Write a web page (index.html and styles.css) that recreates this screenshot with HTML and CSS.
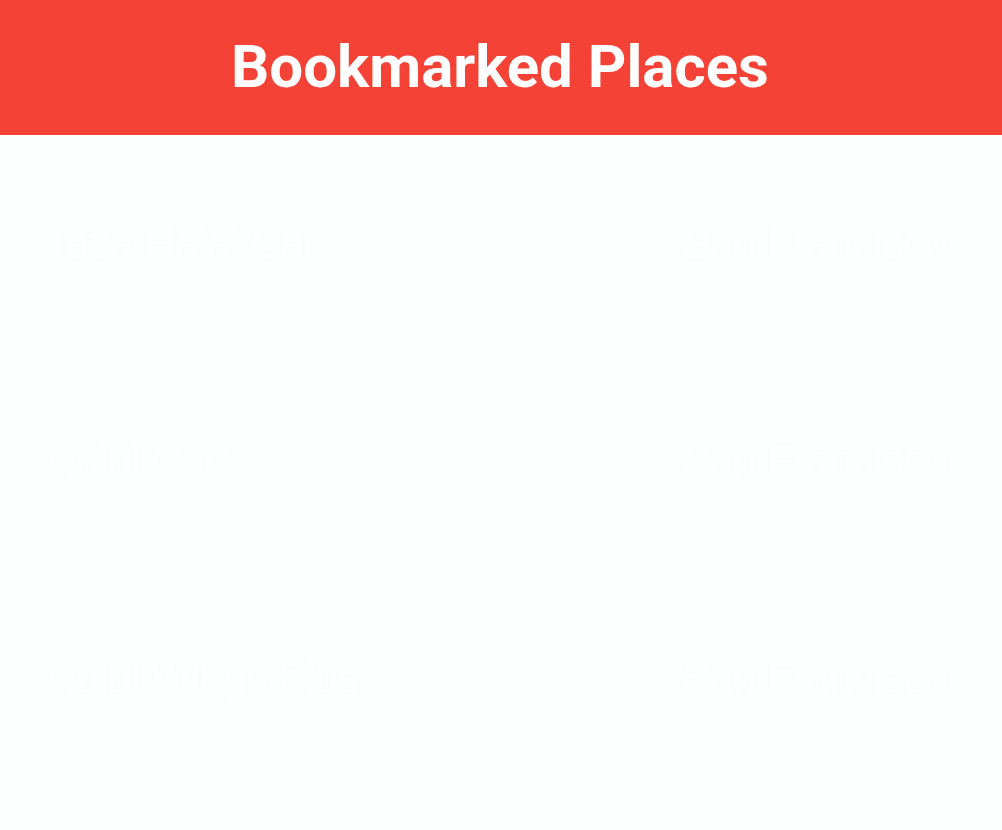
FILE: index.html
```html
<!DOCTYPE html>
<html>
<head>
<meta charset="utf-8">
<link rel="stylesheet" href="styles.css">
</head>
<body>
<header class="header"><h1 class="title">Bookmarked Places</h1></header>
<main class="list">
  <div class="row"><span class="name">Taza Halal Cart</span><span class="city">San Francisco</span></div>
  <div class="row"><span class="name">Halal Cart</span><span class="city">San Francisco</span></div>
  <div class="row"><span class="name">Halal Wings Plus</span><span class="city">San Francisco</span></div>
</main>
</body>
</html>
```
FILE: styles.css
```css
html, body {
  margin: 0;
  padding: 0;
  background: #fcfdfd;
  font-family: Roboto, "Liberation Sans", sans-serif;
}
.header {
  background: #f44336;
  height: 135px;
  display: flex;
  align-items: center;
  justify-content: center;
}
.title {
  margin: 0 2px 0 0;
  color: #ffffff;
  font-size: 60px;
  font-weight: 700;
  line-height: 1;
  padding-bottom: 2px;
}
.list {
  display: flex;
  flex-direction: column;
}
.row {
  height: 217px;
  display: flex;
  align-items: center;
  justify-content: space-between;
  padding: 0 55px 0 45px;
  color: #ffffff;
  font-family: "Liberation Sans", Arial, sans-serif;
  font-size: 43px;
  letter-spacing: -0.7px;
}
```
